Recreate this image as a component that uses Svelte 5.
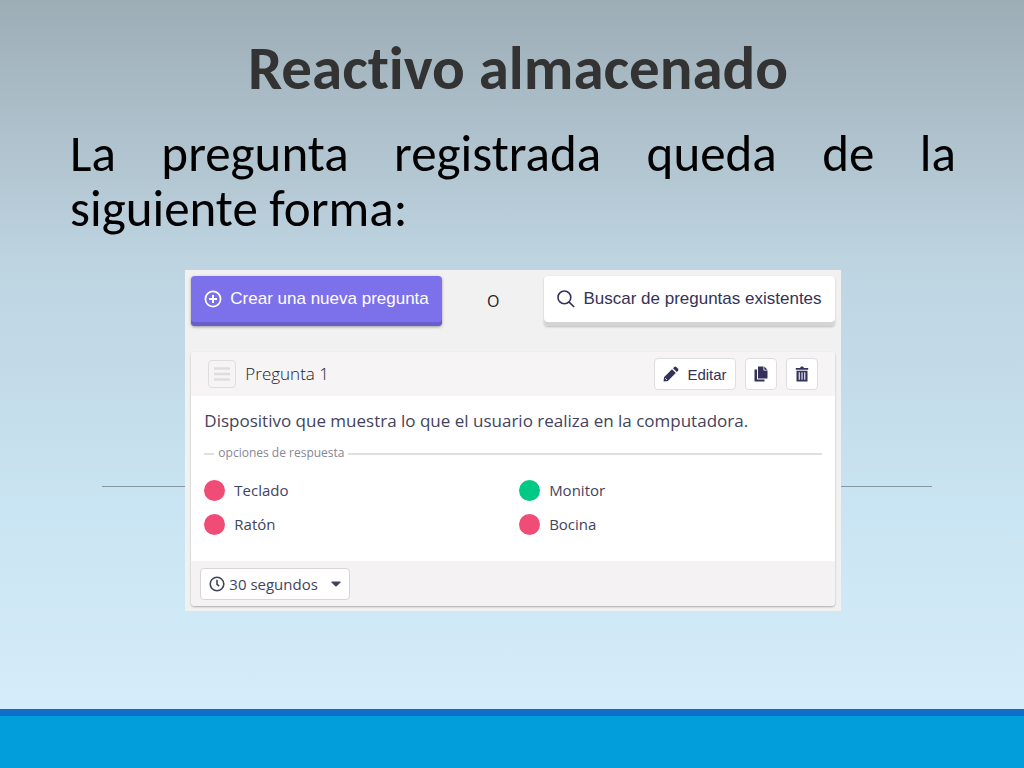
<script lang="ts">
  let seconds = $state("30");

  const answers = [
    { text: "Teclado", correct: false },
    { text: "Monitor", correct: true },
    { text: "Ratón", correct: false },
    { text: "Bocina", correct: false },
  ];
</script>

<main class="slide">
  <h1>Reactivo almacenado</h1>
  <p class="lead">La pregunta registrada queda de la siguiente forma:</p>

  <div class="stage">
    <hr />
    <section class="editor">
      <div class="actions">
        <button class="big primary" type="button">
          <svg width="18" height="18" viewBox="0 0 18 18" fill="none" stroke="currentColor" stroke-width="2">
            <circle cx="9" cy="9" r="7.6" stroke-width="1.7" />
            <path d="M9 5v8M5 9h8" />
          </svg>
          Crear una nueva pregunta
        </button>
        <span class="or">O</span>
        <button class="big" type="button">
          <svg width="18" height="18" viewBox="0 0 18 18" fill="none" stroke="currentColor" stroke-width="1.6">
            <circle cx="7.4" cy="7.4" r="6.4" />
            <path d="M11.8 11.8l5.4 5.2" />
          </svg>
          Buscar de preguntas existentes
        </button>
      </div>

      <article class="card">
        <header>
          <button class="small drag" type="button" aria-label="Mover">
            <svg width="16" height="16" viewBox="0 0 16 16" stroke="currentColor" stroke-width="2.4">
              <path d="M0 2.500h16M0 8h16M0 13.500h16" />
            </svg>
          </button>
          <h2>Pregunta 1</h2>
          <button class="small edit" type="button">
            <svg width="16" height="16" viewBox="0 0 16 16" fill="currentColor">
              <path d="M1 11.2l8-8 3.8 3.8-8 8L.6 15.5zM10 2.2l1.3-1.3q1-.8 2 0l1.8 1.8q.8 1 0 2L13.8 6z" />
              <path d="M2 12l2 2" stroke="#fff" stroke-width=".8" />
            </svg>
            Editar
          </button>
          <button class="small" type="button" aria-label="Duplicar">
            <svg width="16" height="16" viewBox="0 0 16 16" fill="currentColor">
              <path d="M5 .5h5.500v4H14.500v8H5zM11.300.5l3.200 3.200h-3.200z" />
              <path d="M1.500 3.500H4v10h7.500v2h-10z" />
            </svg>
          </button>
          <button class="small" type="button" aria-label="Eliminar">
            <svg width="16" height="16" viewBox="0 0 16 16" fill="currentColor">
              <path d="M1.800 2h4.200l1-1.400h2L10 2h4.200v1.800H1.800zM2.500 4.800h11V15.400h-11z" />
              <path d="M5.300 6.200v7.500M8 6.200v7.500M10.700 6.200v7.500" stroke="#d9d8ec" stroke-width="1.300" />
            </svg>
          </button>
        </header>

        <div class="body">
          <p>Dispositivo que muestra lo que el usuario realiza en la computadora.</p>
          <fieldset>
            <legend>opciones de respuesta</legend>
            <ul>
              {#each answers as answer}
                <li><span class="dot" class:correct={answer.correct}></span>{answer.text}</li>
              {/each}
            </ul>
          </fieldset>
        </div>

        <footer>
          <label class="time">
            <svg width="16" height="16" viewBox="0 0 16 16" fill="none" stroke="currentColor" stroke-width="1.600">
              <circle cx="8" cy="8" r="6.800" />
              <path d="M8 3.800v4.500l2.200 1.800" />
            </svg>
            <select bind:value={seconds} aria-label="Tiempo">
              <option value="30">30 segundos</option>
              <option value="60">60 segundos</option>
            </select>
            <svg width="10" height="6" viewBox="0 0 10 6" fill="currentColor">
              <path d="M1 .5h8q1 .2.500 1L5.700 5.200q-.7.500-1.400 0L.5 1.500Q0 .7 1 .5z" />
            </svg>
          </label>
        </footer>
      </article>
    </section>
  </div>

  <div class="band"></div>
</main>

<style>
  :global(body) {
    margin: 0;
  }
  .slide {
    min-height: 100vh;
    display: flex;
    flex-direction: column;
    box-sizing: border-box;
    padding-top: 32px;
    background: linear-gradient(#9dadb6 0, #bed4e1 34%, #c9e4f2 66%, #d6edfb 93%);
    font-family: "Open Sans", sans-serif;
    color: #43435e;
  }
  h1 {
    margin: 0 7%;
    padding-left: 12px;
    font: bold 61px/72px Carlito, Lato, sans-serif;
    font-variant-ligatures: none;
    color: #333;
    text-align: center;
  }
  .lead {
    margin: 22px 68px 34px 70px;
    font: 51px/55px Carlito, Lato, sans-serif;
    color: #000;
    text-align: justify;
  }
  .stage {
    display: grid;
    padding: 0 9% 0 10%;
  }
  hr {
    grid-area: 1 / 1;
    width: 100%;
    margin: 216px 0 0;
    align-self: start;
    border: 0;
    border-top: 1px solid #8398a4;
  }
  .editor {
    grid-area: 1 / 1;
    z-index: 1;
    width: 79%;
    box-sizing: border-box;
    margin-left: 10%;
    padding: 6px 6px 5px;
    background: #f1f1f1;
  }
  .actions {
    display: flex;
    justify-content: space-between;
    margin-bottom: 26px;
  }
  button {
    display: flex;
    align-items: center;
    font-family: "Liberation Sans", sans-serif;
    color: #343258;
    background: #fff;
    cursor: pointer;
  }
  .big {
    gap: 8px;
    height: 50px;
    padding: 0 13px 4px;
    border: 0;
    border-radius: 4px;
    font-size: 17px;
    box-shadow: inset 0 -4px #d5d5d5, 0 1px 2px #bbb;
  }
  .primary {
    color: #fff;
    background: #7d70eb;
    box-shadow: inset 0 -4px #6a5dcd, 0 1px 3px #999;
  }
  .or {
    align-self: center;
    font-size: 16px;
    color: #222;
  }
  .card {
    border-radius: 4px;
    background: #fff;
    box-shadow: 0 1px 2px #aaa;
    overflow: hidden;
  }
  header {
    display: flex;
    align-items: center;
    gap: 9px;
    height: 44px;
    padding: 0 17px;
    background: #f6f4f5;
  }
  h2 {
    flex: 1;
    margin: 0;
    font-size: 17px;
    font-weight: 300;
    line-height: 24px;
    color: #222;
  }
  .small {
    height: 32px;
    padding: 0 7px;
    border: 1px solid #dedde2;
    border-radius: 4px;
    font-size: 15px;
  }
  .edit {
    gap: 8px;
    padding: 0 8px;
  }
  .drag {
    height: 28px;
    padding: 0 5px;
    color: #dedede;
    background: none;
  }
  .body {
    padding: 13px;
  }
  p {
    margin: 0;
    font-size: 17px;
    line-height: 24px;
  }
  fieldset {
    min-width: 0;
    margin: 11px 0 0;
    padding: 15px 0 13px;
    border: 0;
    border-top: 2px solid #dedfe1;
  }
  legend {
    margin-left: 10px;
    padding: 0 4px 2px;
    font-size: 12px;
    line-height: 18px;
    color: #858795;
  }
  ul {
    display: grid;
    grid-template-columns: 51% 1fr;
    gap: 12px 0;
    margin: 0;
    padding: 0;
    list-style: none;
  }
  li {
    display: flex;
    align-items: center;
    gap: 9px;
    font-size: 15px;
    line-height: 22px;
  }
  .dot {
    width: 21px;
    height: 21px;
    border-radius: 50%;
    background: #f04c75;
  }
  .correct {
    background: #00c985;
  }
  footer {
    display: flex;
    padding: 7px 9px 6px;
    background: #f4f2f3;
  }
  .time {
    display: flex;
    align-items: center;
    gap: 4px;
    height: 30px;
    padding: 0 8px;
    border: 1px solid #d6d5da;
    border-radius: 4px;
    background: #fff;
  }
  select {
    width: 98px;
    padding: 0;
    border: 0;
    appearance: none;
    background: none;
    font: 15px "Open Sans", sans-serif;
    color: inherit;
  }
  .band {
    height: 52px;
    margin-top: auto;
    border-top: 7px solid #0f6ec9;
    background: #029edb;
  }
</style>
